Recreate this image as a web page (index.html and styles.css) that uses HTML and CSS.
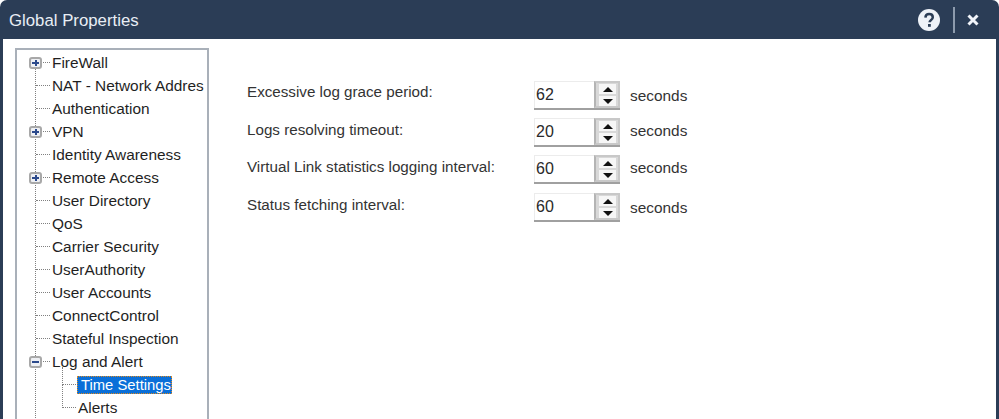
FILE: index.html
```html
<!DOCTYPE html>
<html lang="en">
<head>
<meta charset="utf-8">
<title>Global Properties</title>
<link rel="stylesheet" href="styles.css">
</head>
<body>
<div class="window">
  <header class="titlebar">
    <span class="title">Global Properties</span>
    <div class="controls">
      <svg class="help" width="22" height="22" viewBox="0 0 22 22"><circle cx="11" cy="11" r="11" fill="#eef2f8"/><path d="M7.4 8.6C7.5 6.4 9 5 11.1 5c2.2 0 3.7 1.3 3.7 3.2 0 1.4-.7 2.2-1.9 3-1 .7-1.3 1.1-1.3 2.1" fill="none" stroke="#2b3d56" stroke-width="2.5"/><rect x="10" y="15" width="2.8" height="2.8" fill="#2b3d56"/></svg>
      <span class="divider"></span>
      <svg class="close" width="12" height="12" viewBox="0 0 12 12"><path d="M1.5 1.5l9 9M10.5 1.5l-9 9" stroke="#f2f5fa" stroke-width="3"/></svg>
    </div>
  </header>
  <main class="client">
    <nav class="tree">
      <div class="spine"></div>
      <div class="row plus"><span class="label">FireWall</span></div>
      <div class="row leaf"><span class="label">NAT - Network Addres</span></div>
      <div class="row leaf"><span class="label">Authentication</span></div>
      <div class="row plus"><span class="label">VPN</span></div>
      <div class="row leaf"><span class="label">Identity Awareness</span></div>
      <div class="row plus"><span class="label">Remote Access</span></div>
      <div class="row leaf"><span class="label">User Directory</span></div>
      <div class="row leaf"><span class="label">QoS</span></div>
      <div class="row leaf"><span class="label">Carrier Security</span></div>
      <div class="row leaf"><span class="label">UserAuthority</span></div>
      <div class="row leaf"><span class="label">User Accounts</span></div>
      <div class="row leaf"><span class="label">ConnectControl</span></div>
      <div class="row leaf"><span class="label">Stateful Inspection</span></div>
      <div class="row minus"><span class="label">Log and Alert</span></div>
      <div class="row child first"><span class="label selected">Time Settings</span></div>
      <div class="row child last"><span class="label">Alerts</span></div>
    </nav>
    <section class="form">
      <div class="field f1">
        <span class="name n1">Excessive log grace period:</span>
        <div class="spin"><span class="value">62</span><div class="arrows"><span class="up"></span><span class="down"></span></div></div>
        <span class="unit">seconds</span>
      </div>
      <div class="field f2">
        <span class="name">Logs resolving timeout:</span>
        <div class="spin"><span class="value">20</span><div class="arrows"><span class="up"></span><span class="down"></span></div></div>
        <span class="unit raised">seconds</span>
      </div>
      <div class="field f3">
        <span class="name">Virtual Link statistics logging interval:</span>
        <div class="spin"><span class="value">60</span><div class="arrows"><span class="up"></span><span class="down"></span></div></div>
        <span class="unit raised">seconds</span>
      </div>
      <div class="field f4">
        <span class="name n4">Status fetching interval:</span>
        <div class="spin"><span class="value">60</span><div class="arrows"><span class="up"></span><span class="down"></span></div></div>
        <span class="unit">seconds</span>
      </div>
    </section>
  </main>
</div>
</body>
</html>
```

FILE: styles.css
```css
* { box-sizing: border-box; }
html, body { margin: 0; height: 100%; overflow: hidden; background: #fff; }
body { font-family: "Liberation Sans", Arial, sans-serif; font-size: 15px; color: #2a2a2a; }

.window {
  height: 419px;
  display: flex;
  flex-direction: column;
  background: #2b3d56;
  border-radius: 7px 7px 0 0;
  padding: 0 3px 0 3px;
}
.titlebar {
  height: 39px;
  flex: none;
  display: flex;
  align-items: center;
  justify-content: space-between;
  padding: 0 17px 0 6px;
}
.title { color: #e9eef5; font-size: 16.8px; position: relative; top: 1px; }
.controls { display: flex; align-items: center; }
.help { margin-right: 13px; }
.divider { width: 2px; height: 26px; background: #8d9bad; margin-right: 12px; }

.client {
  flex: 1;
  min-height: 0;
  background: #fff;
  display: flex;
  align-items: flex-start;
  padding: 9px 0 0 12px;
}

.tree {
  position: relative;
  width: 194px;
  height: 380px;
  flex: none;
  border: 2px solid #a9b0b9;
  border-bottom: 0;
  padding-top: 1px;
  overflow: hidden;
}
.spine {
  position: absolute;
  left: 18px;
  top: 13px;
  bottom: 0;
  border-left: 1px dotted #808080;
}
.row {
  position: relative;
  height: 23px;
  padding-left: 34px;
  display: flex;
  align-items: center;
  font-size: 15.4px;
  color: #1f1f1f;
  white-space: nowrap;
}
.row::before {
  content: "";
  position: absolute;
  left: 19px;
  top: 11px;
  width: 14px;
  border-top: 1px dotted #808080;
}
.plus::after, .minus::after {
  content: "";
  box-sizing: border-box;
  position: absolute;
  left: 12px;
  top: 6px;
  width: 13px;
  height: 12px;
  border: 2px solid #a8a8a8;
  border-radius: 3px;
  background-color: #eef0f4;
  background-repeat: no-repeat;
}
.plus::after {
  background-image: linear-gradient(#2c4a8c, #2c4a8c), linear-gradient(#2c4a8c, #2c4a8c);
  background-size: 7px 2px, 2px 6px;
  background-position: center, center;
}
.minus::after {
  background-image: linear-gradient(#2c4a8c, #2c4a8c);
  background-size: 7px 2px;
  background-position: center;
}
.label { padding: 0 1px; }
.child { padding-left: 60px; }
.child::before { left: 45px; width: 14px; }
.child::after {
  content: "";
  position: absolute;
  left: 45px;
  top: -6px;
  height: 18px;
  border-left: 1px dotted #808080;
}
.child.last::after { top: -11px; height: 23px; }
.selected {
  background: #0a6fd8;
  color: #fff;
  font-size: 14.8px;
  outline: 1px dotted #e08a1e;
  outline-offset: -1px;
  padding: 1px 1px 1px 4px;
}

.form { flex: 1; padding: 0 0 0 38px; }
.field {
  display: grid;
  grid-template-columns: 287px 86px auto;
  align-items: center;
  height: 29px;
}
.f1 { margin-top: 33px; }
.f2, .f3 { margin-top: 8px; }
.f4 { margin-top: 9px; }
.name { font-size: 15.2px; color: #333; position: relative; top: -3px; }
.n1 { top: -4px; }
.n4 { top: -3px; }
.spin {
  height: 29px;
  display: flex;
  align-items: stretch;
  border-bottom: 2px solid #a0a0a0;
  box-shadow: inset 1px 1px 0 #ececec;
  background: #fff;
}
.value { flex: 1; padding: 5px 0 0 2px; font-size: 16px; color: #2a2a2a; }
.arrows {
  width: 26px;
  background: #d8d8d8;
  border: 2px solid #c8c8c8;
  border-left-color: #b4b4b4;
  display: flex;
  flex-direction: column;
  gap: 2px;
  padding: 1px 2px 0 3px;
}
.up, .down {
  flex: 1;
  background: #f6f6f6;
  display: flex;
  align-items: center;
  justify-content: center;
}
.up::before, .down::before {
  content: "";
  border-left: 5px solid transparent;
  border-right: 5px solid transparent;
}
.up::before { border-bottom: 5px solid #111; }
.down::before { border-top: 5px solid #111; }
.unit { padding-left: 10px; font-size: 15.4px; color: #333; position: relative; }
.raised { top: -2px; }
```
